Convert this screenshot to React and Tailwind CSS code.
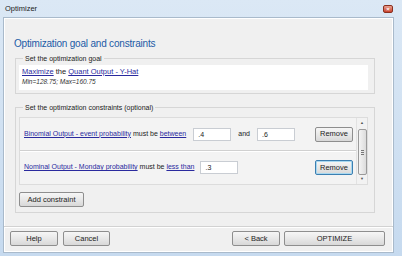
import React from 'react';

const Link = ({ children }) => (
  <span className="text-[#2a2a9e] underline">{children}</span>
);

const Btn = ({ label, className = '', focus = false }) => (
  <button
    className={`h-[15px] rounded-[2px] border text-[7.5px] leading-none text-[#222] bg-gradient-to-b from-[#f6f6f6] via-[#e8e8e8] to-[#d8d8d8] ${
      focus ? 'border-[#3c7fb1] shadow-[inset_0_0_0_1px_#a8d8f0]' : 'border-[#8e8e8e]'
    } ${className}`}
  >
    {label}
  </button>
);

const Field = ({ value, className = '' }) => (
  <div
    className={`h-[13px] bg-white border border-[#c9cdd3] text-[7px] leading-[11px] pl-[4px] text-[#222] ${className}`}
  >
    {value}
  </div>
);

const Scrollbar = () => (
  <div className="w-[11px] flex flex-col items-center bg-[#f2f2f2] border-l border-[#e2e2e2] py-[1px]">
    <div className="h-[8px] text-[4px] leading-[8px] text-[#555]">▲</div>
    <div className="w-[9px] h-[46px] mt-[2px] rounded-[2px] border border-[#9a9a9a] bg-gradient-to-r from-[#f4f4f4] to-[#dcdcdc] flex items-center justify-center">
      <div className="flex flex-col gap-[1px]">
        <div className="w-[3px] h-px bg-[#777]" />
        <div className="w-[3px] h-px bg-[#777]" />
        <div className="w-[3px] h-px bg-[#777]" />
      </div>
    </div>
    <div className="flex-1" />
    <div className="h-[8px] text-[4px] leading-[8px] text-[#555]">▼</div>
  </div>
);

const App = () => {
  return (
    <div
      className="w-[402px] h-[256px] overflow-hidden flex flex-col bg-gradient-to-b from-[#dbe8f5] to-[#c6daef]"
      style={{ fontFamily: '"Liberation Sans", Arial, sans-serif' }}
    >
      <div className="h-[17px] flex items-center pl-[5px] pr-[9px]">
        <span className="text-[7.5px] text-[#1a1a1a]">Optimizer</span>
        <div className="ml-auto w-[10px] h-[8px] rounded-[2px] bg-gradient-to-b from-[#e8a090] to-[#c8402c] border border-[#8a3020] flex items-center justify-center text-white text-[6px] leading-none font-bold">
          ×
        </div>
      </div>

      <div className="ml-[3px] mr-[8px] mb-[3px] flex-1 flex flex-col bg-[#f0f0f0] border border-[#a9bacb] shadow-[inset_0_0_0_1px_#ffffff]">
        <h1 className="pl-[10px] pt-[19px] text-[10px] leading-[13px] tracking-[-0.2px] text-[#1b5ba6]">
          Optimization goal and constraints
        </h1>

        <fieldset className="ml-[11px] mr-[18px] mt-[4px] border border-[#d6d6d6] pl-[3px] pr-[6px] pb-[3px]">
          <legend className="ml-[4px] px-[2px] text-[7px] leading-[9px] text-[#222]">
            Set the optimization goal
          </legend>
          <div className="mt-[2px] h-[25px] bg-white pl-[3px] pt-[2px]">
            <div className="text-[7.5px] leading-[10px] text-[#222]">
              <Link>Maximize</Link> the <Link>Quant Output - Y-Hat</Link>
            </div>
            <div className="text-[6.5px] leading-[9px] italic text-[#333]">
              Min=128.75; Max=160.75
            </div>
          </div>
        </fieldset>

        <fieldset className="ml-[11px] mr-[18px] mt-[9px] border border-[#d6d6d6] pl-[3px] pr-[6px] pb-[3px]">
          <legend className="ml-[4px] px-[2px] text-[7px] leading-[9px] text-[#222]">
            Set the optimization constraints (optional)
          </legend>
          <div className="mt-[5px] h-[68px] flex border border-[#dcdcdc] bg-[#f3f3f3]">
            <div className="flex-1 flex flex-col">
              <div className="h-[33px] flex items-center pl-[4px] pr-[3px] border-b border-[#d0d0d0] shadow-[0_1px_0_#ffffff]">
                <span className="text-[7px] text-[#222] whitespace-nowrap">
                  <Link>Binomial Output - event probability</Link> must be <Link>between</Link>
                </span>
                <Field value=".4" className="ml-[7px] w-[38px]" />
                <span className="ml-[7px] text-[7px] text-[#222]">and</span>
                <Field value=".6" className="ml-[7px] w-[38px]" />
                <Btn label="Remove" className="ml-auto w-[38px]" />
              </div>
              <div className="flex-1 flex items-center pl-[4px] pr-[3px]">
                <span className="text-[7px] text-[#222] whitespace-nowrap">
                  <Link>Nominal Output - Monday probability</Link> must be <Link>less than</Link>
                </span>
                <Field value=".3" className="ml-[6px] w-[38px]" />
                <Btn label="Remove" focus className="ml-auto w-[38px]" />
              </div>
            </div>
            <Scrollbar />
          </div>
          <Btn label="Add constraint" className="mt-[4px] w-[65px]" />
        </fieldset>

        <div className="mt-auto border-t border-[#d2d2d2] shadow-[inset_0_1px_0_#ffffff] flex items-center pt-[4px] pb-[6px] pl-[6px] pr-[8px]">
          <Btn label="Help" className="w-[48px]" />
          <Btn label="Cancel" className="ml-[5px] w-[47px]" />
          <Btn label="< Back" className="ml-auto w-[48px]" />
          <Btn label="OPTIMIZE" className="ml-[4px] w-[101px]" />
        </div>
      </div>
    </div>
  );
};

export default App;
